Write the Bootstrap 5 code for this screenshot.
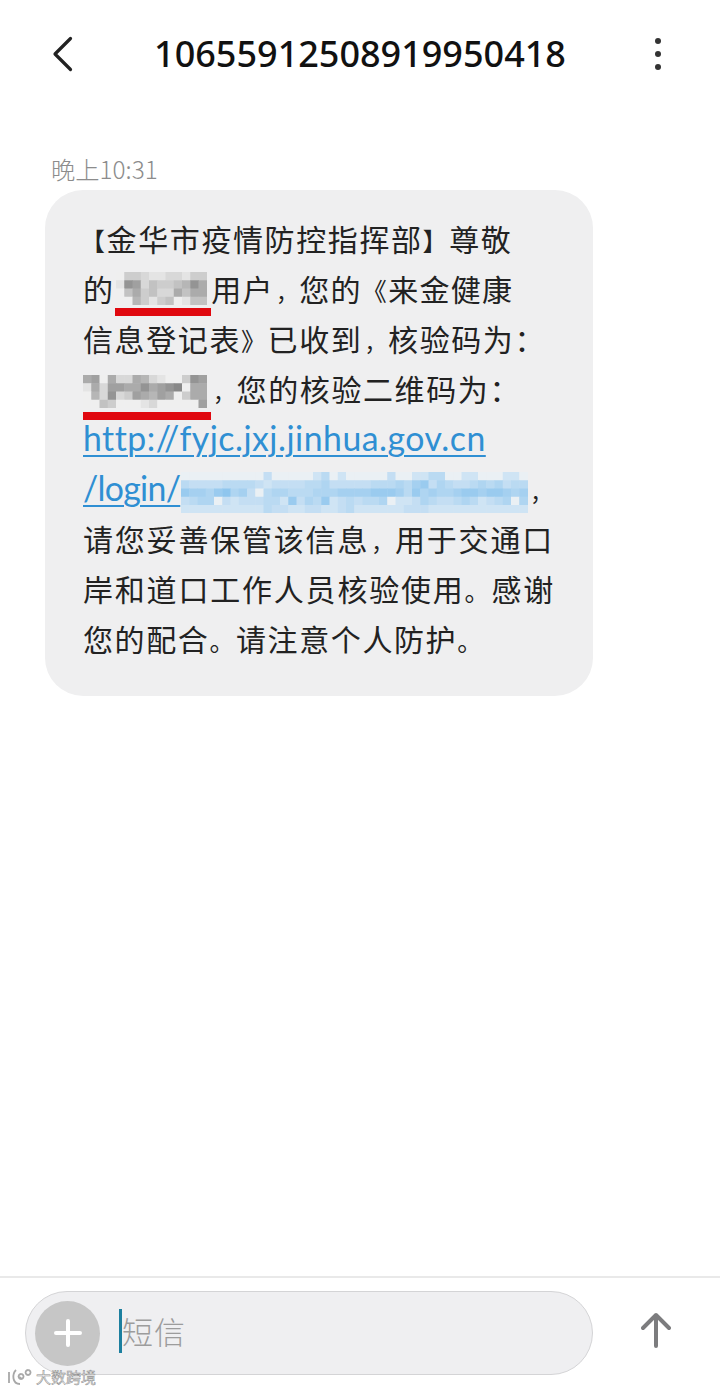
<!DOCTYPE html>
<html lang="zh-CN">
<head>
    <meta charset="UTF-8">
    <meta name="viewport" content="width=device-width, initial-scale=1.0">
    <title>短信</title>
    <link href="https://cdn.jsdelivr.net/npm/bootstrap@5.3.0/dist/css/bootstrap.min.css" rel="stylesheet">
    <style>
        html, body { height: 100%; }
        body {
            background: #fff;
            color: #222;
            font-family: "Noto Sans CJK SC", "Noto Sans", sans-serif;
        }
        .sms-page { height: 1392px; }
        .sms-header { height: 107px; }
        .sms-side { width: 110px; flex-shrink: 0; }
        .sms-side-left { padding-left: 52px; }
        .sms-side-right { padding-right: 58px; }
        .sms-title {
            font-family: "Noto Sans", sans-serif;
            font-weight: 500;
            font-size: 36px;
            line-height: 1;
            color: #111;
        }
        .sms-time {
            font-size: 24.3px;
            line-height: 32px;
            color: #8c8c8c;
            margin: 46px 0 5px 51px;
            font-weight: 300;
        }
        .sms-bubble {
            width: 548px;
            height: 506px;
            margin-left: 45px;
            padding: 23px 0 0 38px;
            background: #efeff0;
            border-radius: 38px;
            font-size: 30px;
            line-height: 50px;
            letter-spacing: 1.6px;
        }
        .sms-line { display: block; white-space: nowrap; height: 50px; }
        .sms-line-narrow { letter-spacing: 1.3px; }
        .sms-line-wide { letter-spacing: 1.8px; }
        /* punctuation in the reference sits in a narrower box than a full em */
        .sms-open { font-size: 25px; margin-left: -3px; }
        .sms-close { font-size: 25px; }
        .sms-comma { font-size: 22px; margin-left: 2px; }
        .sms-link {
            font-family: Lato, "Noto Sans", sans-serif;
            color: #2f8fd3;
            font-size: 33.8px;
            text-decoration: underline;
            text-underline-offset: 4px;
            text-decoration-thickness: 2px;
            letter-spacing: 0.5px;
        }
        .sms-link-tight { letter-spacing: -0.7px; }
        .sms-mask { position: relative; display: inline-block; vertical-align: top; height: 50px; }
        .sms-mask svg { position: absolute; display: block; }
        .sms-redline { position: absolute; height: 8px; background: #e0080f; }
        .sms-footer { height: 116px; border-top: 2px solid #e9e9e9; padding: 13px 0 0 25px; position: relative; }
        .sms-input {
            width: 568px;
            height: 84px;
            border: 1px solid #d4d4d6;
            border-radius: 42px;
            background: #efeff1;
            padding-left: 9px;
        }
        .sms-plus {
            width: 65px;
            height: 65px;
            border-radius: 50%;
            background: #c6c6c6;
            flex-shrink: 0;
        }
        .sms-caret { width: 3px; height: 44px; background: #1c7f9f; margin: 0 0 4px 19px; flex-shrink: 0; }
        .sms-hint { font-size: 31px; line-height: 44px; color: #9c9c9c; font-weight: 300; margin: 0 0 4px 0; letter-spacing: 1px; }
        .sms-send { margin: 21px 0 0 48px; }
        .sms-mark {
            position: absolute;
            left: 7px;
            bottom: 5px;
            color: #eee;
            font-size: 15px;
            line-height: 18px;
            -webkit-text-stroke: 0.5px #8f8f8f;
        }
    </style>
</head>
<body>
    <div class="sms-page d-flex flex-column">
        <!-- top bar -->
        <header class="sms-header d-flex align-items-center">
            <div class="sms-side sms-side-left d-flex">
                <svg width="24" height="36" viewBox="0 0 24 36">
                    <path d="M18.500 2.500 L3 18 L18.500 33.500" fill="none" stroke="#222" stroke-width="3.200" stroke-linecap="round" stroke-linejoin="round"/>
                </svg>
            </div>
            <div class="sms-title flex-grow-1 text-center">10655912508919950418</div>
            <div class="sms-side sms-side-right d-flex justify-content-end">
                <svg width="8" height="34" viewBox="0 0 8 34">
                    <circle cx="4" cy="4" r="3" fill="#333"/><circle cx="4" cy="17" r="3" fill="#333"/><circle cx="4" cy="30" r="3" fill="#333"/>
                </svg>
            </div>
        </header>

        <main class="flex-grow-1">
            <div class="sms-time">晚上10:31</div>
            <div class="sms-bubble">
                <span class="sms-line"><span class="sms-open">【</span>金华市疫情防控指挥部<span class="sms-close">】</span>尊敬</span>
                <span class="sms-line sms-line-narrow">的<span class="sms-mask" id="maskName"></span>用户<span class="sms-comma">，</span>您的<span class="sms-close">《</span>来金健康</span>
                <span class="sms-line">信息登记表<span class="sms-close">》</span>已收到<span class="sms-comma">，</span>核验码为：</span>
                <span class="sms-line"><span class="sms-mask" id="maskCode"></span><span class="sms-comma">，</span>您的核验二维码为：</span>
                <span class="sms-line"><span class="sms-link">http://fyjc.jxj.jinhua.gov.cn</span></span>
                <span class="sms-line"><span class="sms-link sms-link-tight">/login/</span><span class="sms-mask" id="maskLink"></span><span class="sms-comma">，</span></span>
                <span class="sms-line sms-line-wide">请您妥善保管该信息<span class="sms-comma">，</span>用于交通口</span>
                <span class="sms-line sms-line-wide">岸和道口工作人员核验使用<span class="sms-close">。</span>感谢</span>
                <span class="sms-line">您的配合<span class="sms-close">。</span>请注意个人防护<span class="sms-close">。</span></span>
            </div>
        </main>

        <!-- input bar -->
        <footer class="sms-footer d-flex align-items-start">
            <div class="sms-input d-flex align-items-center">
                <div class="sms-plus d-flex align-items-center justify-content-center">
                    <svg width="28" height="28" viewBox="0 0 28 28"><path d="M14 2V26M2 14H26" stroke="#fff" stroke-width="4" stroke-linecap="round"/></svg>
                </div>
                <div class="sms-caret"></div>
                <div class="sms-hint">短信</div>
            </div>
            <svg class="sms-send" width="30" height="36" viewBox="0 0 30 36">
                <path d="M15 34V3M2 16 15 3 28 16" fill="none" stroke="#7c7c7e" stroke-width="4" stroke-linecap="round" stroke-linejoin="round"/>
            </svg>
            <div class="sms-mark d-flex align-items-center gap-1">
                <svg width="25" height="20" viewBox="0 0 25 20"><path d="M2 5V16M9 3C5 7 5 17 13 17M14 7A2.500 2.500 0 1 0 14.100 7M21 3A2.500 2.500 0 1 0 21.100 3M11 9 15 12" fill="none" stroke="#a8a8a8" stroke-width="1.800"/></svg>
                <span>大数跨境</span>
            </div>
        </footer>
    </div>

    <script src="https://cdn.jsdelivr.net/npm/bootstrap@5.3.0/dist/js/bootstrap.bundle.min.js"></script>
    <script>
        // pixelated masks, read cell by cell from the picture. each digit is a strength 0-9
        const GRAY = ['#efefef', '#e4e4e4', '#d8d8d8', '#cdcdcd', '#c2c2c2', '#b6b6b6', '#ababab', '#a0a0a0', '#949494', '#888888'];
        const BLUE = ['#eaf0f4', '#cfe4f4', '#c4def3', '#badaf2', '#afd5f1', '#a5d0f0', '#9acbef', '#8fc6ee', '#84c0ed', '#7abbec'];

        const masks = [
            { id: 'maskName', width: 97, x: 2, y: 9, cell: 8.250, colors: GRAY, line: { top: 45, left: 1, width: 96 }, rows: [
                '03321122133',
                '18724334586',
                '04634226466',
                '00531340144'
            ] },
            { id: 'maskCode', width: 128, x: 0, y: 12, cell: 8.250, colors: GRAY, line: { top: 49, left: 0, width: 128 }, rows: [
                '670622652100387',
                '162776686789066',
                '052823765760366',
                '004300012000007'
            ] },
            { id: 'maskLink', width: 348, x: 1, y: 9, cell: 8.250, colors: BLUE, rows: [
                '000000000020000013010000020011330011000110',
                '322223333212222334222223334356243223434233',
                '655467452034433344455556665364544566566545',
                '234402122233162436123233401124322343123404',
                '111111111132211221123111111222111111111111'
            ] }
        ];

        const svgNs = 'http://www.w3.org/2000/svg';
        masks.forEach(mask => {
            const host = document.getElementById(mask.id);
            const svg = document.createElementNS(svgNs, 'svg');
            host.style.width = mask.width + 'px';
            svg.setAttribute('width', mask.rows[0].length * mask.cell);
            svg.setAttribute('height', mask.rows.length * mask.cell);
            svg.style.left = mask.x + 'px';
            svg.style.top = mask.y + 'px';
            mask.rows.forEach((row, r) => {
                [...row].forEach((shade, c) => {
                    const rect = document.createElementNS(svgNs, 'rect');
                    rect.setAttribute('x', c * mask.cell);
                    rect.setAttribute('y', r * mask.cell);
                    rect.setAttribute('width', mask.cell + 0.5);
                    rect.setAttribute('height', mask.cell + 0.5);
                    rect.setAttribute('fill', mask.colors[+shade]);
                    svg.appendChild(rect);
                });
            });
            host.appendChild(svg);
            if (mask.line) {
                const line = document.createElement('div');
                line.className = 'sms-redline';
                line.style.top = mask.line.top + 'px';
                line.style.left = mask.line.left + 'px';
                line.style.width = mask.line.width + 'px';
                host.appendChild(line);
            }
        });
    </script>
</body>
</html>
